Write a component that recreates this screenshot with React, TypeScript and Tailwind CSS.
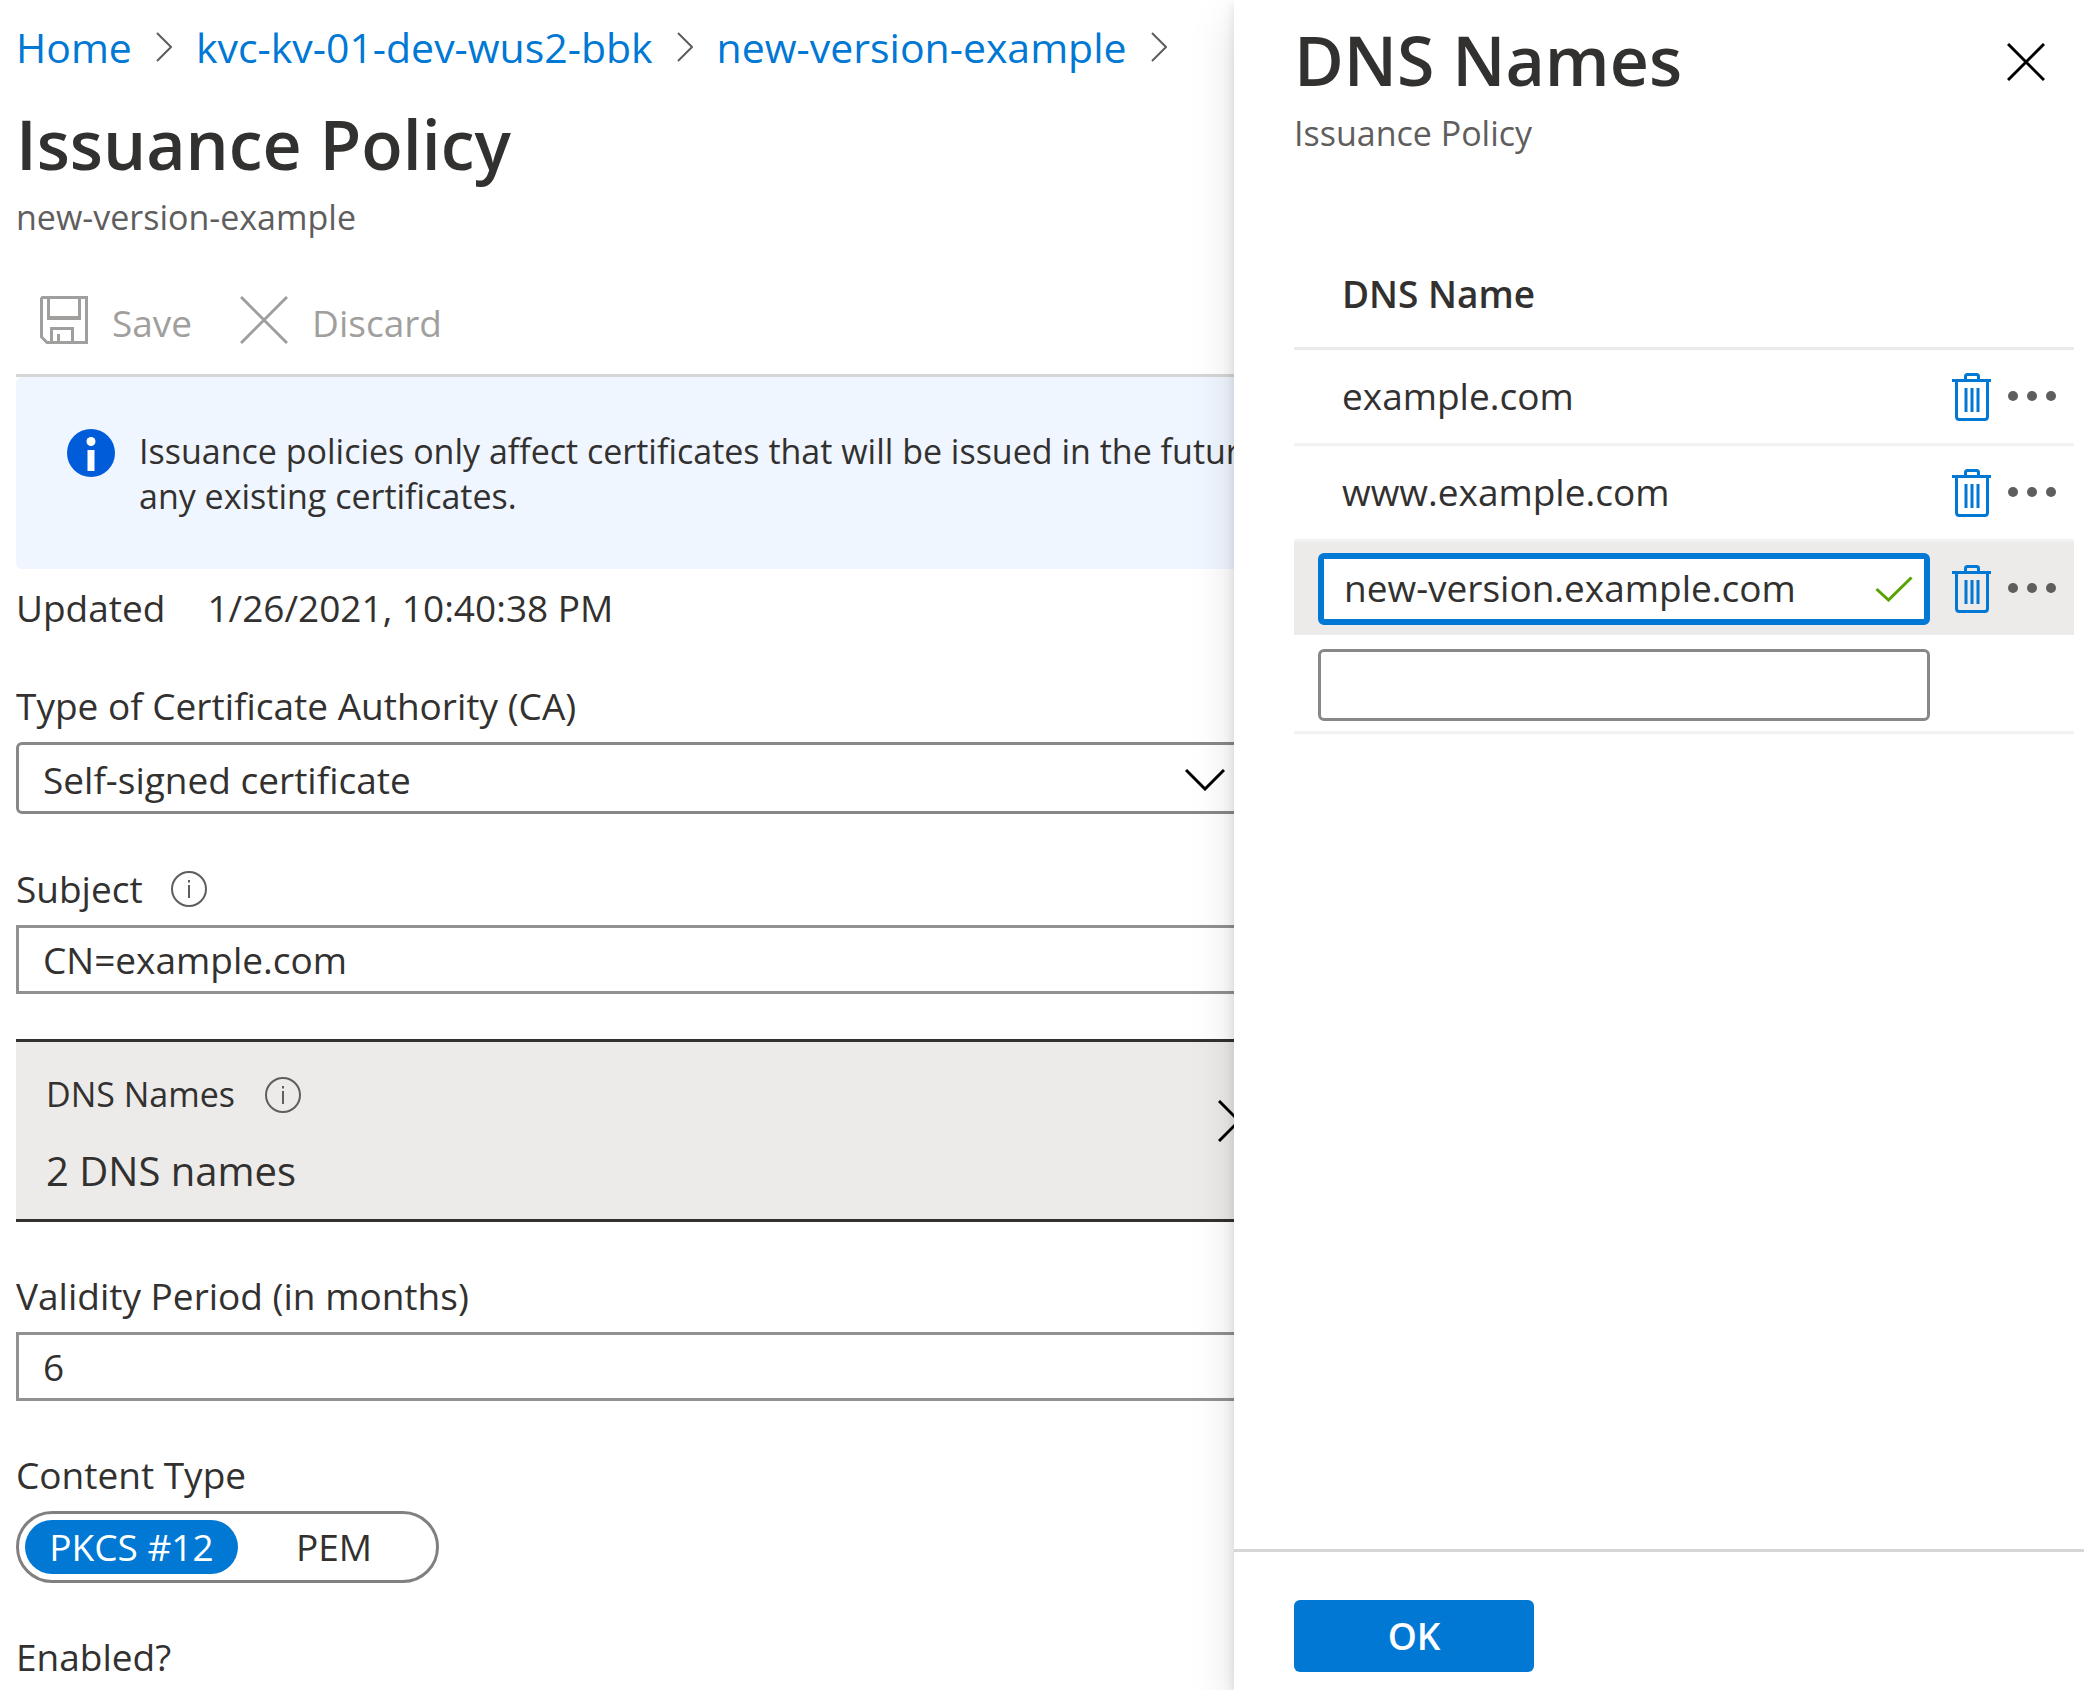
import { useState } from "react";

function BreadcrumbChevron() {
  return (
    <svg width="16" height="30" viewBox="0 0 16 30" fill="none" stroke="#605e5c" strokeWidth="2" aria-hidden="true">
      <path d="M1 1L15 15L1 29" />
    </svg>
  );
}

function SaveIcon() {
  return (
    <svg width="48" height="48" viewBox="0 0 48 48" fill="none" stroke="#a19f9d" strokeWidth="3" aria-hidden="true">
      <path d="M2.5 1.5H46.5V46.5H7L1.5 41V2.5Z" />
      <path d="M8.5 1.5V22.5H39.5V1.5" />
      <path d="M8.5 21.5H39.5" />
      <path d="M11.5 46.5V32.5H32.5V46.5" />
      <path d="M18.5 38V46" />
    </svg>
  );
}

function DiscardIcon() {
  return (
    <svg width="48" height="48" viewBox="0 0 48 48" fill="none" stroke="#a19f9d" strokeWidth="3" aria-hidden="true">
      <path d="M1 1L47 47M47 1L1 47" />
    </svg>
  );
}

function InfoBadge() {
  return (
    <svg className="shrink-0" width="48" height="48" viewBox="0 0 48 48" aria-hidden="true">
      <circle cx="24" cy="24" r="24" fill="#015cda" />
      <circle cx="24" cy="12.5" r="4.5" fill="#fff" />
      <rect x="20.5" y="21" width="7" height="21" fill="#fff" />
    </svg>
  );
}

function InfoOutline() {
  return (
    <svg width="36" height="36" viewBox="0 0 36 36" fill="none" stroke="#605e5c" strokeWidth="2" aria-hidden="true">
      <circle cx="18" cy="18" r="17" />
      <path d="M18 14V27M18 9V11.5" />
    </svg>
  );
}

function TrashIcon() {
  return (
    <svg width="39" height="48" viewBox="0 0 39 48" fill="none" stroke="#0078d4" strokeWidth="3" aria-hidden="true">
      <path d="M0 7.5H39" />
      <path d="M13.5 7V3.5Q13.5 1.5 15.5 1.5H24.5Q26.5 1.5 26.5 3.5V7" />
      <path d="M4.5 7.5V43.5Q4.5 46.5 7.5 46.5H32.5Q35.5 46.5 35.5 43.5V7.5" />
      <path d="M14 15V39M20 15V39M26 15V39" />
    </svg>
  );
}

function MoreIcon() {
  return (
    <svg width="48" height="12" viewBox="0 0 48 12" fill="#605e5c" aria-hidden="true">
      <circle cx="5" cy="5" r="5" />
      <circle cx="24" cy="5" r="5" />
      <circle cx="43" cy="5" r="5" />
    </svg>
  );
}

function RowActions({ name }: { name: string }) {
  return (
    <div className="flex items-center gap-[17px]">
      <button type="button" aria-label={`Delete ${name}`}>
        <TrashIcon />
      </button>
      <button type="button" aria-label={`More actions for ${name}`}>
        <MoreIcon />
      </button>
    </div>
  );
}

const crumbs = ["Home", "kvc-kv-01-dev-wus2-bbk", "new-version-example"];
const savedNames = ["example.com", "www.example.com"];
const contentTypes = ["PKCS #12", "PEM"];

function PolicyPage() {
  const [contentType, setContentType] = useState("PKCS #12");
  const [subject, setSubject] = useState("CN=example.com");
  const [months, setMonths] = useState("6");

  return (
    <main className="min-w-0 flex-1 overflow-hidden pt-5 pl-4">
      <div className="-mr-5">
        <nav aria-label="Breadcrumb" className="flex items-center gap-6 text-[41px] leading-[54px] whitespace-nowrap text-[#0078d4]">
          {crumbs.map((crumb) => (
            <span key={crumb} className="flex items-center gap-6">
              <a href="#">{crumb}</a>
              <BreadcrumbChevron />
            </span>
          ))}
        </nav>
        <h1 className="mt-[22px] text-[68px] leading-[96px] font-semibold">Issuance Policy</h1>
        <p className="mt-[3px] text-[34px] leading-[45px] text-[#605e5c]">new-version-example</p>

        <div className="mt-14 flex gap-12 border-b-3 border-[#d6d6d6] pb-6 pl-6 leading-[54px] text-[#a19f9d]">
          <button type="button" className="flex items-start gap-6">
            <SaveIcon />
            Save
          </button>
          <button type="button" className="flex items-start gap-6">
            <DiscardIcon />
            Discard
          </button>
        </div>

        <div className="flex gap-6 rounded-md bg-[#f0f6ff] pt-[52px] pb-[50px] pl-[51px] text-[34px] leading-[45px] whitespace-nowrap">
          <InfoBadge />
          <p>
            Issuance policies only affect certificates that will be issued in the future
            <br />
            any existing certificates.
          </p>
        </div>

        <dl className="mt-[15px] flex gap-[42px]">
          <dt>Updated</dt>
          <dd>1/26/2021, 10:40:38 PM</dd>
        </dl>

        <div className="mt-[50px] flex flex-col gap-3">
          <label htmlFor="ca-type">Type of Certificate Authority (CA)</label>
          <div className="relative">
            <select id="ca-type" className="h-[72px] w-full appearance-none rounded-md border-3 border-[#8a8886] bg-white px-6 pt-1">
              <option>Self-signed certificate</option>
            </select>
            <svg
              className="pointer-events-none absolute top-[27px] right-[29px]"
              width="40"
              height="22"
              viewBox="0 0 40 22"
              fill="none"
              stroke="#000"
              strokeWidth="3"
              aria-hidden="true"
            >
              <path d="M1 1L20 20L39 1" />
            </svg>
          </div>
        </div>

        <div className="mt-[51px] flex flex-col gap-3">
          <div className="flex items-center gap-7">
            <label htmlFor="subject">Subject</label>
            <InfoOutline />
          </div>
          <input
            id="subject"
            value={subject}
            onChange={(e) => setSubject(e.target.value)}
            className="h-[69px] w-full border-3 border-[#919191] bg-white px-6"
          />
        </div>

        <button
          type="button"
          className="mt-[45px] flex w-full items-start justify-between border-y-3 border-[#323130] bg-[#ecebe9] pt-[30px] pr-[14px] pb-[21px] pl-[30px] text-left"
        >
          <span className="flex flex-col gap-[27px]">
            <span className="flex items-center gap-[30px] text-[34px] leading-[45px]">
              DNS Names
              <InfoOutline />
            </span>
            <span className="text-[40px] leading-[54px]">2 DNS names</span>
          </span>
          <svg className="mt-7" width="22" height="42" viewBox="0 0 22 42" fill="none" stroke="#000" strokeWidth="3" aria-hidden="true">
            <path d="M1 1L21 21L1 41" />
          </svg>
        </button>

        <div className="mt-[50px] flex flex-col gap-3">
          <label htmlFor="validity">Validity Period (in months)</label>
          <input
            id="validity"
            value={months}
            onChange={(e) => setMonths(e.target.value)}
            className="h-[69px] w-full border-3 border-[#919191] bg-white px-6"
          />
        </div>

        <fieldset className="mt-[50px]">
          <legend>Content Type</legend>
          <div className="mt-3 inline-flex rounded-full border-3 border-[#808080] p-1.5">
            {contentTypes.map((type) => (
              <label
                key={type}
                className="min-w-[192px] rounded-full px-6 text-center leading-[54px] has-checked:min-w-[213px] has-checked:bg-[#0078d4] has-checked:text-white"
              >
                <input
                  type="radio"
                  name="content-type"
                  className="sr-only"
                  checked={contentType === type}
                  onChange={() => setContentType(type)}
                />
                {type}
              </label>
            ))}
          </div>
        </fieldset>

        <p className="mt-[50px]">Enabled?</p>
      </div>
    </main>
  );
}

function DnsPanel() {
  const [draft, setDraft] = useState("new-version.example.com");
  const [blank, setBlank] = useState("");

  return (
    <aside
      aria-label="DNS Names"
      className="relative z-10 flex w-[850px] shrink-0 flex-col bg-white shadow-[0_19px_43px_rgba(0,0,0,0.13),0_4px_11px_rgba(0,0,0,0.11)]"
    >
      <div className="flex-1 pt-3 pr-[10px] pl-[60px]">
        <header className="flex items-center justify-between pr-[19px]">
          <h2 className="text-[68px] leading-[96px] font-semibold">DNS Names</h2>
          <button type="button" aria-label="Close" className="pt-1 pr-[10px]">
            <svg width="38" height="38" viewBox="0 0 38 38" fill="none" stroke="#000" strokeWidth="3" aria-hidden="true">
              <path d="M1 1L37 37M37 1L1 37" />
            </svg>
          </button>
        </header>
        <p className="mt-[3px] text-[34px] leading-[45px] text-[#605e5c]">Issuance Policy</p>

        <table className="mt-[85px] w-full border-separate border-spacing-0">
          <thead>
            <tr>
              <th className="h-[109px] border-b-3 border-[#eaeaea] pl-12 text-left font-semibold">DNS Name</th>
              <th className="w-[132px] border-b-3 border-[#eaeaea]" aria-label="Actions" />
            </tr>
          </thead>
          <tbody>
            {savedNames.map((name) => (
              <tr key={name}>
                <td className="h-[96px] border-b-3 border-[#f2f2f2] pb-0.5 pl-12">{name}</td>
                <td className="border-b-3 border-[#f2f2f2] pl-[10px]">
                  <RowActions name={name} />
                </td>
              </tr>
            ))}
            <tr>
              <td className="h-[96px] border-b-3 border-white bg-[#ecebe9] pr-3 pl-6">
                <div className="relative">
                  <input
                    aria-label="DNS name"
                    value={draft}
                    onChange={(e) => setDraft(e.target.value)}
                    className="block h-[72px] w-full rounded-md border-6 border-[#0078d4] bg-white pr-14 pb-0.5 pl-5 outline-none"
                  />
                  <svg
                    className="pointer-events-none absolute top-[23px] right-[17px]"
                    width="38"
                    height="26"
                    viewBox="0 0 38 26"
                    fill="none"
                    stroke="#57a300"
                    strokeWidth="3"
                    aria-hidden="true"
                  >
                    <path d="M1.500 13L13.500 24L36.500 1.500" />
                  </svg>
                </div>
              </td>
              <td className="border-b-3 border-white bg-[#ecebe9] pl-[10px]">
                <RowActions name={draft} />
              </td>
            </tr>
            <tr>
              <td className="h-[96px] border-b-3 border-[#f2f2f2] pr-3 pl-6">
                <input
                  aria-label="New DNS name"
                  value={blank}
                  onChange={(e) => setBlank(e.target.value)}
                  className="block h-[72px] w-full rounded-md border-3 border-[#8a8886] bg-white px-6"
                />
              </td>
              <td className="border-b-3 border-[#f2f2f2]" />
            </tr>
          </tbody>
        </table>
      </div>

      <footer className="border-t-3 border-[#d6d6d6] pt-12 pb-[18px] pl-[60px]">
        <button type="button" className="h-[72px] w-60 rounded-md bg-[#0078d4] font-semibold text-white">
          OK
        </button>
      </footer>
    </aside>
  );
}

export default function App() {
  return (
    <div className="flex min-h-screen overflow-hidden bg-white font-['Open_Sans','Noto_Sans',sans-serif] text-[37px] leading-[48px] text-[#323130]">
      <PolicyPage />
      <DnsPanel />
    </div>
  );
}
